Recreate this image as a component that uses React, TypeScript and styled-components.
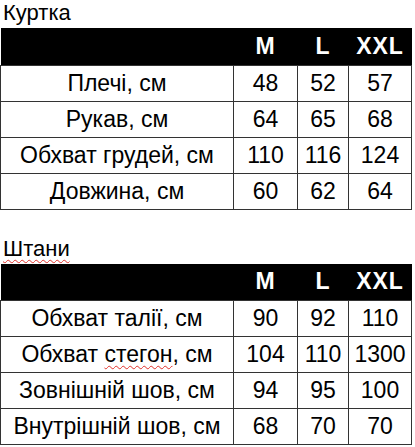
import React from 'react';
import styled, { createGlobalStyle } from 'styled-components';

type Row = { label: React.ReactNode; values: string[] };

const sizes = ['M', 'L', 'XXL'];

function App() {
  const jacket: Row[] = [
    { label: 'Плечі, см', values: ['48', '52', '57'] },
    { label: 'Рукав, см', values: ['64', '65', '68'] },
    { label: 'Обхват грудей, см', values: ['110', '116', '124'] },
    { label: 'Довжина, см', values: ['60', '62', '64'] },
  ];

  const pants: Row[] = [
    { label: 'Обхват талії, см', values: ['90', '92', '110'] },
    {
      label: (
        <>
          Обхват <Typo>стегон</Typo>, см
        </>
      ),
      values: ['104', '110', '1300'],
    },
    { label: 'Зовнішній шов, см', values: ['94', '95', '100'] },
    { label: 'Внутрішній шов, см', values: ['68', '70', '70'] },
  ];

  return (
    <>
      <GlobalStyle />
      <Page>
        <SizeTable title="Куртка" rows={jacket} />
        <SizeTable title={<Typo>Штани</Typo>} rows={pants} />
      </Page>
    </>
  );
}

function SizeTable({ title, rows }: { title: React.ReactNode; rows: Row[] }) {
  return (
    <Section>
      <Title>{title}</Title>
      <Table>
        <colgroup>
          <col style={{ width: 233 }} />
          <col style={{ width: 64 }} />
          <col style={{ width: 51 }} />
          <col style={{ width: 63 }} />
        </colgroup>
        <thead>
          <HeadRow>
            <HeadCell />
            {sizes.map((s) => (
              <HeadCell key={s}>{s}</HeadCell>
            ))}
          </HeadRow>
        </thead>
        <tbody>
          {rows.map((r, i) => (
            <BodyRow key={i}>
              <Cell>{r.label}</Cell>
              {r.values.map((v, j) => (
                <Cell key={j}>{v}</Cell>
              ))}
            </BodyRow>
          ))}
        </tbody>
      </Table>
    </Section>
  );
}

const GlobalStyle = createGlobalStyle`
  body {
    margin: 0;
    background: #fff;
    color: #000;
    font-family: 'Liberation Sans', Arial, sans-serif;
  }
`;

const Page = styled.div`
  width: 415px;
  display: flex;
  flex-direction: column;
  gap: 26px;
`;

const Section = styled.section`
  display: flex;
  flex-direction: column;
`;

const Title = styled.div`
  height: 28px;
  padding-left: 3px;
  font-size: 22px;
  line-height: 26px;
`;

const Typo = styled.span`
  text-decoration: underline wavy #e0302a;
  text-decoration-thickness: 1px;
  text-underline-offset: 3px;
`;

const Table = styled.table`
  width: 411px;
  border-collapse: collapse;
  table-layout: fixed;
`;

const HeadRow = styled.tr`
  height: 37px;
  background: #000;
`;

const HeadCell = styled.th`
  padding: 0;
  color: #fff;
  font-size: 23px;
  font-weight: bold;
  letter-spacing: 1px;
  text-align: center;
`;

const BodyRow = styled.tr`
  height: 36px;
`;

const Cell = styled.td`
  padding: 0;
  border: 1.5px solid #333;
  font-size: 23px;
  text-align: center;
  white-space: nowrap;
`;

export default App;
